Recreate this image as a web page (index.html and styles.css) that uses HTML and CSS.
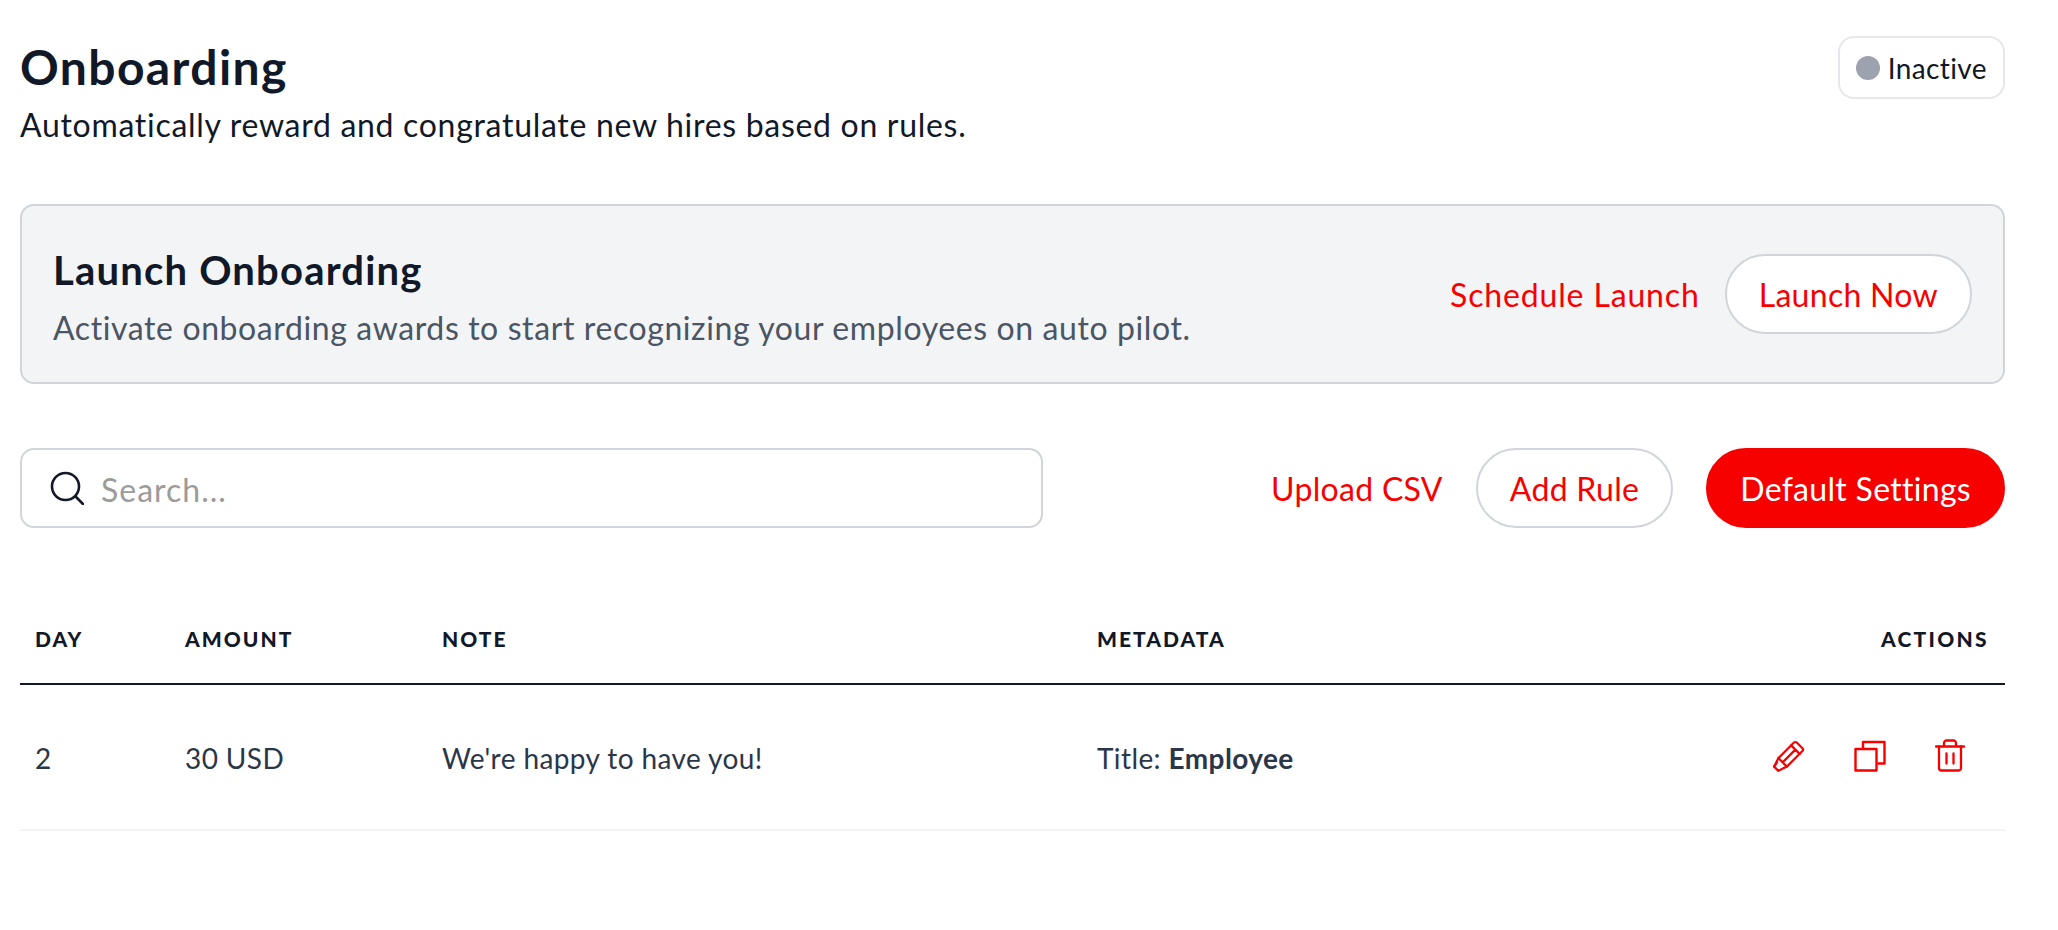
FILE: index.html
```html
<!DOCTYPE html>
<html lang="en">
<head>
  <meta charset="UTF-8">
  <title>Onboarding</title>
  <link rel="stylesheet" href="styles.css">
</head>
<body>

  <div class="header">
    <div>
      <h1>Onboarding</h1>
      <p class="subtitle">Automatically reward and congratulate new hires based on rules.</p>
    </div>
    <div class="status"><span class="dot"></span>Inactive</div>
  </div>

  <div class="launch">
    <div class="launch-text">
      <h2>Launch Onboarding</h2>
      <p>Activate onboarding awards to start recognizing your employees on auto pilot.</p>
    </div>
    <div class="launch-actions">
      <a class="link" href="#">Schedule Launch</a>
      <a class="btn" href="#">Launch Now</a>
    </div>
  </div>

  <div class="toolbar">
    <div class="search">
      <svg class="search-icon" viewBox="0 0 34 34" fill="none" stroke="#111827" stroke-width="2.6" stroke-linecap="round">
        <circle cx="15.5" cy="15.5" r="13.5"/>
        <path d="M25.5 25.5L33 33"/>
      </svg>
      <input type="text" placeholder="Search...">
    </div>
    <div class="toolbar-actions">
      <a class="link" href="#">Upload CSV</a>
      <a class="btn" href="#">Add Rule</a>
      <a class="btn btn-red" href="#">Default Settings</a>
    </div>
  </div>

  <table>
    <thead>
      <tr>
        <th class="col-day">Day</th>
        <th class="col-amount">Amount</th>
        <th class="col-note">Note</th>
        <th class="col-meta">Metadata</th>
        <th class="col-actions">Actions</th>
      </tr>
    </thead>
    <tbody>
      <tr>
        <td>2</td>
        <td>30 USD</td>
        <td>We're happy to have you!</td>
        <td>Title: <strong>Employee</strong></td>
        <td class="icons">
          <div class="icon-row">
            <svg viewBox="0 0 32 32" fill="none" stroke="#f60000" stroke-width="2.2" stroke-linejoin="round" stroke-linecap="round">
              <g transform="rotate(45 16 16)">
                <path d="M10 3a2 2 0 0 1 2-2h8a2 2 0 0 1 2 2v22l-3 9h-6l-3-9z"/>
                <path d="M10 7h12M10 25h12M16 7v18M13 34l-1-5"/>
              </g>
            </svg>
            <svg viewBox="0 0 32 32" fill="none" stroke="#f60000" stroke-width="2.4" stroke-linejoin="round">
              <path d="M9 8.500V2h21.500v21.500H23.500"/>
              <rect x="1.500" y="9" width="21" height="21.500"/>
            </svg>
            <svg class="trash" viewBox="0 0 30 33" fill="none" stroke="#f60000" stroke-width="2.3" stroke-linejoin="round" stroke-linecap="round">
              <path d="M1 7.500h28M9 7.500V4a2.500 2.500 0 0 1 2.500-2.500h7A2.500 2.500 0 0 1 21 4v3.500"/>
              <path d="M4 7.500V29a2.500 2.500 0 0 0 2.500 2.500h17A2.500 2.500 0 0 0 26 29V7.500"/>
              <path d="M11.500 14.500v10M18.500 14.500v10"/>
            </svg>
          </div>
        </td>
      </tr>
    </tbody>
  </table>

</body>
</html>
```

FILE: styles.css
```css
body {
  margin: 0;
  padding: 36px 53px 0 20px;
  background: #fff;
  font-family: "Lato", "Open Sans", sans-serif;
  color: #111827;
}

a {
  text-decoration: none;
}

.header {
  display: flex;
  justify-content: space-between;
  align-items: flex-start;
  margin-bottom: 58px;
}

h1 {
  margin: 0;
  font-size: 48px;
  line-height: 62px;
  font-weight: 700;
  letter-spacing: 1.4px;
}

.subtitle {
  margin: 6px 0 0;
  font-size: 32px;
  line-height: 42px;
  font-weight: 400;
  letter-spacing: 0.7px;
}

.status {
  display: flex;
  align-items: center;
  gap: 8px;
  height: 59px;
  padding: 0 16px;
  border: 2px solid #e5e7eb;
  border-radius: 16px;
  font-size: 28px;
  letter-spacing: 0.4px;
}

.dot {
  width: 24px;
  height: 24px;
  border-radius: 50%;
  background: #9ca3af;
}

.launch {
  display: flex;
  justify-content: space-between;
  align-items: center;
  height: 176px;
  padding: 0 31px;
  background: #f3f4f6;
  border: 2px solid #d1d5db;
  border-radius: 14px;
  margin-bottom: 64px;
}

.launch-text {
  padding-top: 5px;
}

.launch h2 {
  margin: 0 0 12px;
  font-size: 40px;
  line-height: 50px;
  font-weight: 700;
  letter-spacing: 1.2px;
}

.launch p {
  margin: 0;
  font-size: 32px;
  line-height: 42px;
  letter-spacing: 0.6px;
  color: #4b5563;
}

.launch-actions,
.toolbar-actions {
  display: flex;
  align-items: center;
}

.launch-actions {
  gap: 25px;
}

.toolbar-actions {
  gap: 33px;
}

.link {
  color: #f60000;
  font-size: 32px;
}

.launch-actions .link {
  letter-spacing: 0.85px;
}

.toolbar-actions .link {
  letter-spacing: 0.3px;
}

.btn {
  display: flex;
  align-items: center;
  height: 76px;
  padding: 0 32px;
  background: #fff;
  border: 2px solid #d1d5db;
  border-radius: 40px;
  color: #f60000;
  font-size: 32px;
  letter-spacing: 0.3px;
}

.btn-red {
  background: #f60000;
  border-color: #f60000;
  color: #fff;
}

.toolbar {
  display: flex;
  justify-content: space-between;
  align-items: center;
  height: 80px;
  margin-bottom: 67px;
}

.search {
  display: flex;
  align-items: center;
  gap: 17px;
  box-sizing: border-box;
  width: 1023px;
  height: 80px;
  padding: 0 28px;
  border: 2px solid #d1d5db;
  border-radius: 14px;
}

.search-icon {
  width: 34px;
  height: 34px;
  flex: none;
}

.search input {
  flex: 1;
  border: none;
  outline: none;
  padding: 2px 0 0;
  font-family: inherit;
  font-size: 32px;
  letter-spacing: 1px;
  color: #111827;
}

.search input::placeholder {
  color: #9b9b9b;
}

table {
  width: 100%;
  border-collapse: collapse;
  table-layout: fixed;
}

th {
  height: 86px;
  padding: 0 15px 2px;
  border-bottom: 2px solid #111827;
  font-size: 21px;
  font-weight: 900;
  letter-spacing: 2px;
  text-align: left;
  text-transform: uppercase;
}

.col-day { width: 120px; }
.col-amount { width: 227px; }
.col-note { width: 625px; }

.col-actions {
  width: 300px;
  padding-right: 16px;
  letter-spacing: 2.3px;
  text-align: right;
}

td {
  height: 142px;
  padding: 2px 15px 0;
  border-bottom: 2px solid #f3f4f6;
  font-size: 28px;
  letter-spacing: 0.4px;
  color: #2b3648;
}

.icons {
  height: 141px;
  padding: 0 40px 3px 15px;
}

.icon-row {
  display: flex;
  justify-content: flex-end;
  align-items: center;
  gap: 49px;
}

.icon-row svg {
  width: 32px;
  height: 32px;
}

.icon-row .trash {
  width: 30px;
  height: 33px;
}
```
